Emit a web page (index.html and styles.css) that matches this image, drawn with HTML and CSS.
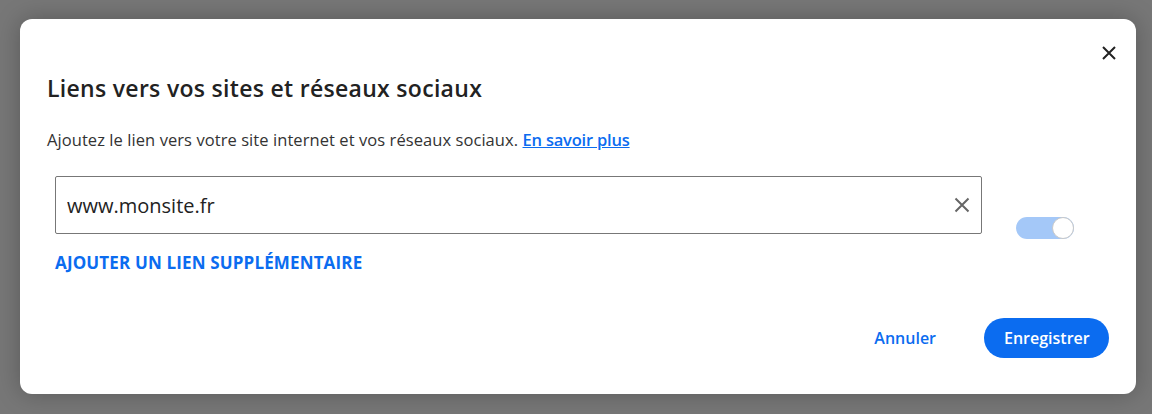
FILE: index.html
```html
<!DOCTYPE html>
<html lang="fr">
<head>
    <meta charset="UTF-8">
    <meta name="viewport" content="width=device-width, initial-scale=1.0">
    <title>Liens vers vos sites</title>
    <link rel="stylesheet" href="styles.css">
</head>
<body>

<div class="overlay">
    <div class="dialog">
        <div class="dialog-top">
            <button class="close-btn" type="button" aria-label="Fermer">
                <svg width="14" height="14" viewBox="0 0 14 14"><path d="M1 1L13 13M13 1L1 13" stroke="#222" stroke-width="2" fill="none"/></svg>
            </button>
        </div>

        <h2 class="title">Liens vers vos sites et réseaux sociaux</h2>
        <p class="intro">Ajoutez le lien vers votre site internet et vos réseaux sociaux. <a href="#">En savoir plus</a></p>

        <div class="links-row">
            <div class="links-col">
                <div class="link-input">
                    <input type="text" value="www.monsite.fr">
                    <button class="clear-btn" type="button" aria-label="Effacer">
                        <svg width="16" height="16" viewBox="0 0 16 16"><path d="M1.5 1.5L14.5 14.5M14.5 1.5L1.5 14.5" stroke="#666" stroke-width="2" fill="none"/></svg>
                    </button>
                </div>
                <a href="#" class="add-link">AJOUTER UN LIEN SUPPLÉMENTAIRE</a>
            </div>
            <div class="toggle on"><span class="knob"></span></div>
        </div>

        <div class="actions">
            <button class="btn-text" type="button">Annuler</button>
            <button class="btn-primary" type="button">Enregistrer</button>
        </div>
    </div>
</div>

</body>
</html>
```

FILE: styles.css
```css
body {
    margin: 0;
    padding: 0;
    background: #777;
    font-family: "Open Sans", "Noto Sans", sans-serif;
}

.overlay {
    padding: 19px 16px 20px 20px;
}

.dialog {
    background: #fff;
    border-radius: 12px;
    box-shadow: 0 0 24px rgba(0, 0, 0, 0.25);
    padding: 22px 27px 36px 27px;
    height: 317px;
}

.dialog-top {
    display: flex;
    justify-content: flex-end;
    height: 24px;
}

.close-btn {
    border: none;
    background: none;
    padding: 0;
    margin-right: -12px;
    width: 24px;
    height: 24px;
    display: flex;
    align-items: center;
    justify-content: center;
    cursor: pointer;
}

.title {
    margin: 8px 0 0 0;
    font-size: 23px;
    line-height: 30px;
    font-weight: 600;
    color: #222;
    letter-spacing: 0.3px;
}

.intro {
    margin: 26px 0 0 0;
    font-size: 16.5px;
    line-height: 22px;
    color: #333;
    letter-spacing: 0.07px;
}

.intro a {
    color: #0b6cf0;
    font-weight: 600;
    letter-spacing: -0.2px;
    text-decoration: underline;
}

.links-row {
    display: flex;
    gap: 34px;
    margin: 25px 0 0 8px;
}

.links-col {
    width: 927px;
    display: flex;
    flex-direction: column;
    align-items: flex-start;
}

.link-input {
    display: flex;
    align-items: center;
    align-self: stretch;
    height: 56px;
    border: 1px solid #777;
    border-radius: 2px;
    padding: 0 9px 0 11px;
}

.link-input input {
    flex: 1;
    border: none;
    outline: none;
    font-family: inherit;
    font-size: 20px;
    color: #222;
    padding: 0;
}

.clear-btn {
    border: none;
    background: none;
    padding: 0;
    width: 20px;
    height: 20px;
    display: flex;
    align-items: center;
    justify-content: center;
}

.add-link {
    margin-top: 17px;
    color: #0b6cf0;
    font-weight: 700;
    font-size: 17px;
    letter-spacing: 0.15px;
    text-decoration: none;
}

.toggle {
    margin-top: 41px;
    width: 58px;
    height: 22px;
    border-radius: 11px;
    background: #a4c8f8;
    position: relative;
}

.toggle .knob {
    position: absolute;
    right: 0;
    top: 0;
    width: 20px;
    height: 20px;
    border-radius: 50%;
    background: #fff;
    border: 1px solid #c8c8c8;
}

.actions {
    display: flex;
    justify-content: flex-end;
    align-items: center;
    gap: 26px;
    margin-top: 43px;
}

.btn-text {
    border: none;
    background: none;
    font-family: inherit;
    font-size: 16px;
    font-weight: 600;
    color: #0b6cf0;
    padding: 10px 22px;
    cursor: pointer;
}

.btn-primary {
    border: none;
    background: #0b6cf0;
    color: #fff;
    font-family: inherit;
    font-size: 16px;
    font-weight: 600;
    height: 40px;
    padding: 0 20px;
    border-radius: 20px;
    width: 125px;
    cursor: pointer;
}
```
